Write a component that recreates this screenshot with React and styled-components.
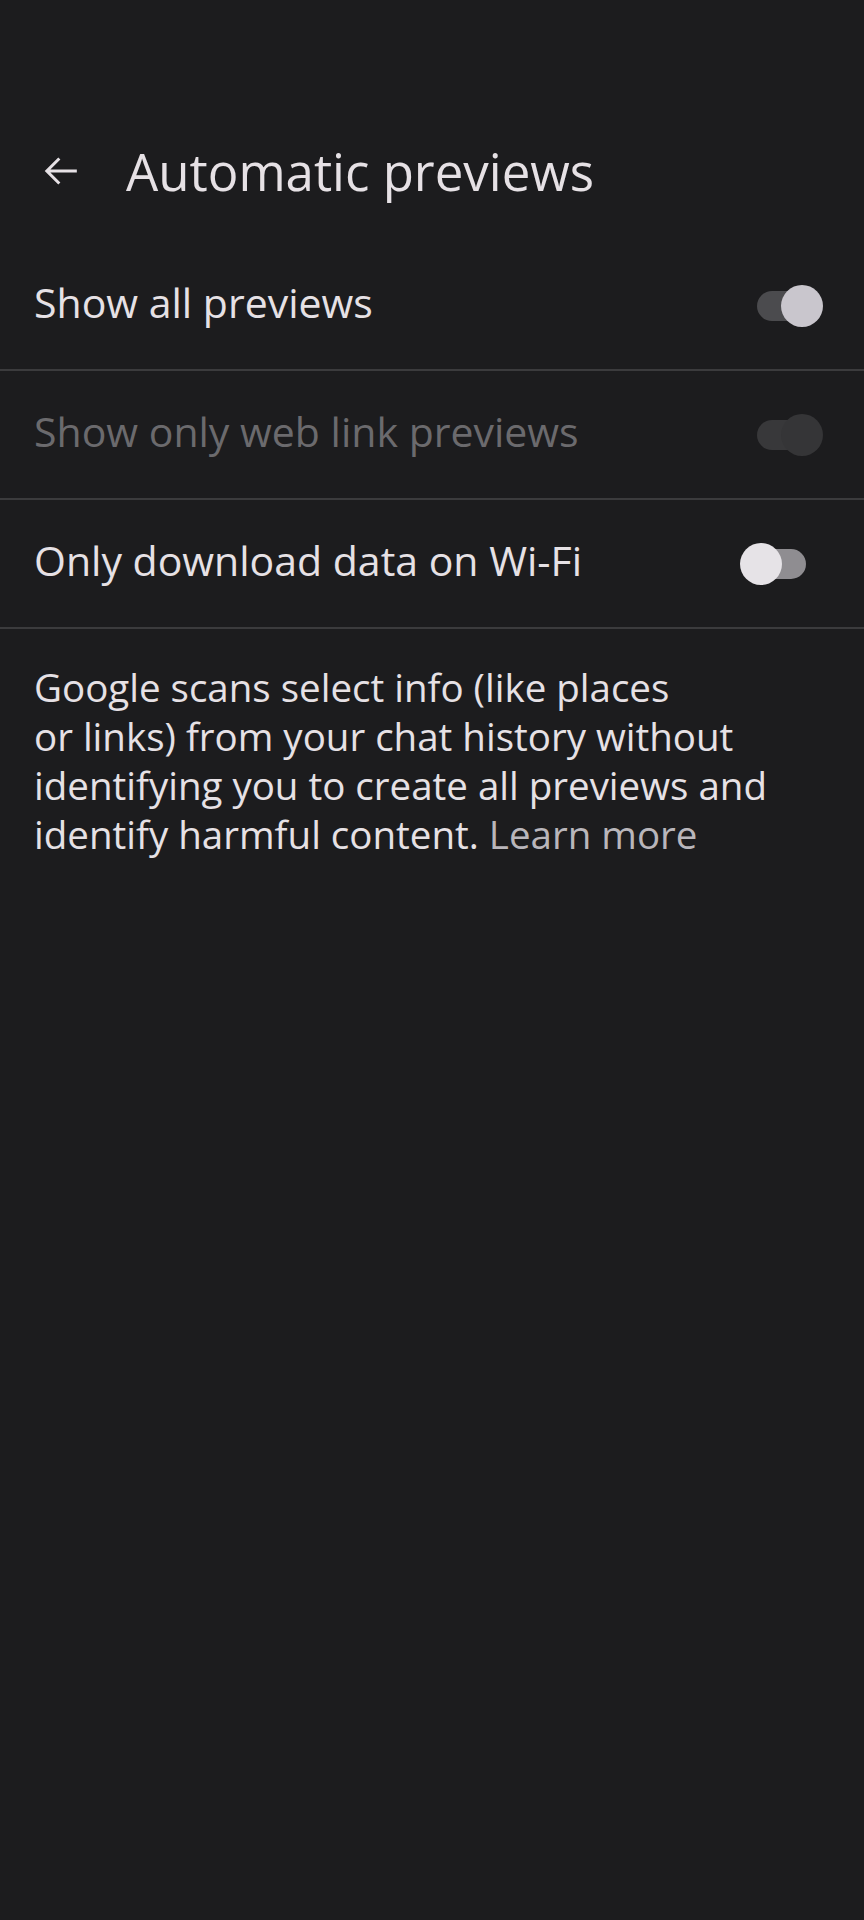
import React from 'react';
import styled, { createGlobalStyle } from 'styled-components';

const GlobalStyle = createGlobalStyle`
  html, body {
    margin: 0;
    padding: 0;
    background: #1c1c1e;
  }
  body {
    font-family: "Open Sans", Roboto, sans-serif;
    -webkit-font-smoothing: antialiased;
  }
`;

const Page = styled.div`
  width: 864px;
  min-height: 1920px;
  background: #1c1c1e;
  padding-top: 103px;
  box-sizing: border-box;
`;

const Header = styled.header`
  height: 136px;
  display: flex;
  align-items: center;
  padding-left: 39px;
  gap: 44px;
`;

const BackButton = styled.button`
  width: 43px;
  height: 43px;
  padding: 0;
  border: none;
  background: transparent;
  display: flex;
  align-items: center;
  justify-content: center;
  color: #e6e1e5;
`;

const Title = styled.h1`
  margin: 0;
  font-size: 51px;
  font-weight: 400;
  color: #e6e1e5;
`;

const List = styled.div`
  display: flex;
  flex-direction: column;
  margin-top: 3px;
`;

const Row = styled.div`
  height: 127px;
  display: flex;
  align-items: center;
  justify-content: space-between;
  padding: 0 40px 0 34px;
  border-bottom: 2px solid #3b3b3d;
`;

const Label = styled.span`
  font-size: 41px;
  padding-bottom: 7px;
  color: ${(props) => (props.$disabled ? '#6b6a6d' : '#e6e1e5')};
`;

const SwitchBox = styled.div`
  position: relative;
  width: 84px;
  height: 42px;
  flex-shrink: 0;
`;

const Track = styled.div`
  position: absolute;
  left: 17px;
  top: 6px;
  width: 49px;
  height: 30px;
  border-radius: 15px;
  background: ${(props) => props.$color};
`;

const Thumb = styled.div`
  position: absolute;
  top: 0;
  left: ${(props) => (props.$on ? '41px' : '0')};
  width: 42px;
  height: 42px;
  border-radius: 50%;
  background: ${(props) => props.$color};
`;

const Note = styled.p`
  margin: 0;
  padding: 34px 20px 0 34px;
  font-size: 38.5px;
  line-height: 49px;
  color: #e6e1e5;
  white-space: nowrap;
`;

const LearnMore = styled.a`
  color: #b9b6bb;
  text-decoration: none;
`;

const switchColors = {
  on: { track: '#4b4b4e', thumb: '#c9c6cd' },
  disabled: { track: '#38383a', thumb: '#353537' },
  off: { track: '#8f8d91', thumb: '#e6e3e7' },
};

const Switch = ({ state }) => {
  const c = switchColors[state];
  return (
    <SwitchBox>
      <Track $color={c.track} />
      <Thumb $on={state !== 'off'} $color={c.thumb} />
    </SwitchBox>
  );
};

const BackArrow = () => (
  <svg width="40" height="40" viewBox="0 0 24 24" fill="none">
    <path d="M21.5 12H3.5M11 4.5L3.5 12l7.5 7.5" stroke="currentColor" strokeWidth="1.8" strokeLinecap="butt" />
  </svg>
);

const App = () => {
  return (
    <Page>
      <GlobalStyle />
      <Header>
        <BackButton aria-label="Back">
          <BackArrow />
        </BackButton>
        <Title>Automatic previews</Title>
      </Header>
      <List>
        <Row>
          <Label>Show all previews</Label>
          <Switch state="on" />
        </Row>
        <Row>
          <Label $disabled>Show only web link previews</Label>
          <Switch state="disabled" />
        </Row>
        <Row>
          <Label>Only download data on Wi-Fi</Label>
          <Switch state="off" />
        </Row>
      </List>
      <Note>
        Google scans select info (like places
        <br />
        or links) from your chat history without
        <br />
        identifying you to create all previews and
        <br />
        identify harmful content. <LearnMore href="#">Learn more</LearnMore>
      </Note>
    </Page>
  );
};

export default App;
